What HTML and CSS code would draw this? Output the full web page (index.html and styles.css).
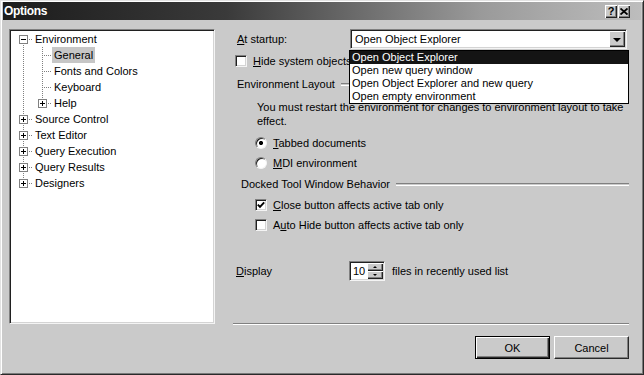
FILE: index.html
```html
<!DOCTYPE html>
<html lang="en">
<head>
    <meta charset="UTF-8">
    <title>Options</title>
    <link rel="stylesheet" href="styles.css">
</head>
<body>
    <div class="window">
        <div class="titlebar">
            <span class="title">Options</span>
            <div class="caption-buttons">
                <span class="cap-btn">?</span>
                <span class="cap-btn">
                    <svg width="8" height="7" viewBox="0 0 8 7"><path d="M0.5 0.5 L7.5 6.5 M7.5 0.5 L0.5 6.5" stroke="#000" stroke-width="1.8"/></svg>
                </span>
            </div>
        </div>

        <div class="content">
            <div class="tree">
                <div class="node"><span class="cell first"><span class="expander"></span></span><span class="label">Environment</span></div>
                <div class="node"><span class="cell pass"></span><span class="cell tee"></span><span class="label selected">General</span></div>
                <div class="node"><span class="cell pass"></span><span class="cell tee"></span><span class="label">Fonts and Colors</span></div>
                <div class="node"><span class="cell pass"></span><span class="cell tee"></span><span class="label">Keyboard</span></div>
                <div class="node"><span class="cell pass"></span><span class="cell last"><span class="expander plus"></span></span><span class="label">Help</span></div>
                <div class="node"><span class="cell tee"><span class="expander plus"></span></span><span class="label">Source Control</span></div>
                <div class="node"><span class="cell tee"><span class="expander plus"></span></span><span class="label">Text Editor</span></div>
                <div class="node"><span class="cell tee"><span class="expander plus"></span></span><span class="label">Query Execution</span></div>
                <div class="node"><span class="cell tee"><span class="expander plus"></span></span><span class="label">Query Results</span></div>
                <div class="node"><span class="cell last"><span class="expander plus"></span></span><span class="label">Designers</span></div>
            </div>

            <div class="pane">
                <div class="field-row startup">
                    <span class="field-label"><u>A</u>t startup:</span>
                    <div class="combo">
                        <span class="combo-text">Open Object Explorer</span>
                        <span class="combo-arrow"><span class="tri-down"></span></span>
                        <ul class="combo-list">
                            <li class="active">Open Object Explorer</li>
                            <li>Open new query window</li>
                            <li>Open Object Explorer and new query</li>
                            <li>Open empty environment</li>
                        </ul>
                    </div>
                </div>

                <div class="check-row hide-row">
                    <span class="checkbox"></span>
                    <span><u>H</u>ide system objects</span>
                </div>

                <div class="group-title env-title">Environment Layout</div>

                <p class="note">You must restart the environment for changes to environment layout to take<br>effect.</p>

                <div class="radio-row first-radio">
                    <span class="radio checked"></span>
                    <span><u>T</u>abbed documents</span>
                </div>
                <div class="radio-row">
                    <span class="radio"></span>
                    <span><u>M</u>DI environment</span>
                </div>

                <div class="group-title docked-title">Docked Tool Window Behavior</div>

                <div class="check-row option-row">
                    <span class="checkbox">
                        <svg width="8" height="8" viewBox="0 0 8 8"><path d="M0.8 3.6 L3 5.9 L7.2 1.3" fill="none" stroke="#000" stroke-width="1.9"/></svg>
                    </span>
                    <span><u>C</u>lose button affects active tab only</span>
                </div>
                <div class="check-row option-row">
                    <span class="checkbox"></span>
                    <span>A<u>u</u>to Hide button affects active tab only</span>
                </div>

                <div class="field-row display-row">
                    <span class="field-label"><u>D</u>isplay</span>
                    <div class="spin">
                        <span class="spin-value">10</span>
                        <span class="spin-buttons">
                            <span class="spin-btn"><span class="tri-up"></span></span>
                            <span class="spin-btn"><span class="tri-small-down"></span></span>
                        </span>
                    </div>
                    <span class="spin-suffix">files in recently used list</span>
                </div>

                <div class="separator"></div>

                <div class="buttons">
                    <button class="btn default">OK</button>
                    <button class="btn">Cancel</button>
                </div>
            </div>
        </div>
    </div>
</body>
</html>
```

FILE: styles.css
```css
body {
    margin: 0;
    font-family: "Liberation Sans", Arial, sans-serif;
    font-size: 11px;
    color: #000;
    background: #cacaca;
}

.window {
    width: 644px;
    height: 375px;
    box-sizing: border-box;
    background: #cacaca;
    border: 1px solid;
    border-color: #e2e2e2 #2a2a2a #2a2a2a #e2e2e2;
    box-shadow: inset 1px 1px #fff, inset -1px -1px #7a7a7a;
    padding: 1px 2px 2px 2px;
}

/* title bar */
.titlebar {
    height: 18px;
    display: flex;
    align-items: center;
    justify-content: space-between;
    padding: 0 11px 0 1px;
    background: linear-gradient(90deg, #1c1c1c 0%, #3a3a3a 35%, #9a9a9a 75%, #bdbdbd 100%);
}

.title {
    color: #fff;
    font-weight: bold;
    font-size: 12px;
    letter-spacing: -0.3px;
}

.caption-buttons {
    display: flex;
    gap: 1px;
}

.cap-btn {
    width: 12px;
    height: 13px;
    display: flex;
    align-items: center;
    justify-content: center;
    background: #cacaca;
    font-weight: bold;
    font-size: 11px;
    box-shadow: inset 1px 1px #fff, inset -1px -1px #222, inset -2px -2px #808080;
}

/* main area */
.content {
    display: flex;
    gap: 18px;
    padding: 9px 12px 0 6px;
}

/* tree */
.tree {
    width: 206px;
    height: 295px;
    box-sizing: border-box;
    flex: none;
    background: #fff;
    border: 1px solid;
    border-color: #808080 #f4f4f4 #f4f4f4 #808080;
    box-shadow: inset 1px 1px #202020, inset -1px -1px #d4d4d4;
    padding: 1px 0 0 4px;
}

.node {
    display: flex;
    height: 16px;
}

.cell {
    width: 19px;
    height: 16px;
    flex: none;
    display: flex;
    justify-content: center;
    align-items: flex-start;
    background-repeat: no-repeat;
}

.cell.pass {
    background-image: repeating-linear-gradient(#808080 0 1px, transparent 1px 2px);
    background-size: 1px 16px;
    background-position: 9px 0;
}

.cell.tee {
    background-image: repeating-linear-gradient(#808080 0 1px, transparent 1px 2px),
        repeating-linear-gradient(90deg, #808080 0 1px, transparent 1px 2px);
    background-size: 1px 16px, 10px 1px;
    background-position: 9px 0, 9px 8px;
}

.cell.last {
    background-image: repeating-linear-gradient(#808080 0 1px, transparent 1px 2px),
        repeating-linear-gradient(90deg, #808080 0 1px, transparent 1px 2px);
    background-size: 1px 8px, 10px 1px;
    background-position: 9px 0, 9px 8px;
}

.cell.first {
    background-image: repeating-linear-gradient(#808080 0 1px, transparent 1px 2px),
        repeating-linear-gradient(90deg, #808080 0 1px, transparent 1px 2px);
    background-size: 1px 8px, 10px 1px;
    background-position: 9px 8px, 9px 8px;
}

.expander {
    width: 9px;
    height: 9px;
    box-sizing: border-box;
    margin-top: 4px;
    border: 1px solid #808080;
    background: #fff linear-gradient(#000, #000) center / 5px 1px no-repeat;
}

.expander.plus {
    background: linear-gradient(#000, #000) center / 5px 1px no-repeat,
        linear-gradient(#000, #000) center / 1px 5px no-repeat, #fff;
}

.label {
    line-height: 16px;
    padding: 0 2px;
    white-space: nowrap;
}

.label.selected {
    background: #c6c6c6;
}

/* right pane */
.pane {
    flex: 1;
    display: flex;
    flex-direction: column;
}

.field-row {
    display: flex;
    align-items: center;
    height: 20px;
}

.startup .field-label {
    width: 113px;
    padding-left: 4px;
}

.display-row {
    margin-top: 26px;
}

.display-row .field-label {
    width: 113px;
    padding-left: 3px;
}

.combo {
    position: relative;
    flex: 1;
    margin-right: 2px;
    height: 20px;
    box-sizing: border-box;
    display: flex;
    align-items: center;
    background: #fff;
    border: 1px solid;
    border-color: #808080 #f4f4f4 #f4f4f4 #808080;
    box-shadow: inset 1px 1px #202020, inset -1px -1px #d4d4d4;
    padding: 1px;
}

.combo-text {
    flex: 1;
    padding-left: 3px;
}

.combo-arrow,
.spin-btn {
    display: flex;
    align-items: center;
    justify-content: center;
    background: #cacaca;
    box-shadow: inset 1px 1px #fff, inset -1px -1px #222, inset -2px -2px #808080;
}

.combo-arrow {
    width: 16px;
    height: 16px;
}

.tri-down {
    border-left: 4px solid transparent;
    border-right: 4px solid transparent;
    border-top: 4px solid #000;
    margin-top: 1px;
}

.combo-list {
    position: absolute;
    top: calc(100% + 2px);
    left: -2px;
    right: -3px;
    z-index: 2;
    margin: 0;
    padding: 0;
    list-style: none;
    background: #fff;
    border: 1px solid #000;
}

.combo-list li {
    height: 13px;
    line-height: 13px;
    padding-left: 2px;
    white-space: nowrap;
}

.combo-list li.active {
    background: #141414;
    color: #fff;
}

.check-row,
.radio-row {
    display: flex;
    align-items: center;
    gap: 6px;
    height: 20px;
    white-space: nowrap;
}

.hide-row {
    height: 23px;
    padding-left: 2px;
}

.option-row {
    padding-left: 22px;
}

.checkbox {
    width: 12px;
    height: 12px;
    box-sizing: border-box;
    flex: none;
    display: flex;
    align-items: center;
    justify-content: center;
    background: #fff;
    border: 1px solid;
    border-color: #808080 #f4f4f4 #f4f4f4 #808080;
    box-shadow: inset 1px 1px #202020, inset -1px -1px #d4d4d4;
}

.radio-row {
    padding-left: 22px;
}

.first-radio {
    margin-top: 5px;
}

.radio {
    width: 12px;
    height: 12px;
    box-sizing: border-box;
    flex: none;
    border-radius: 50%;
    background: #fff;
    border: 1px solid;
    border-color: #808080 #f4f4f4 #f4f4f4 #808080;
    box-shadow: inset 1px 1px #202020;
}

.radio.checked {
    background: radial-gradient(circle, #000 0 2px, #fff 2.2px);
}

.group-title {
    display: flex;
    align-items: center;
    gap: 6px;
    white-space: nowrap;
}

.group-title::after {
    content: "";
    flex: 1;
    height: 1px;
    border-top: 1px solid #808080;
    border-bottom: 1px solid #fff;
}

.env-title {
    height: 24px;
    padding-left: 4px;
}

.docked-title {
    height: 22px;
    padding-left: 8px;
}

.note {
    margin: 4px 0 0;
    padding-left: 24px;
    line-height: 14px;
    white-space: nowrap;
}

.spin {
    width: 36px;
    height: 20px;
    box-sizing: border-box;
    display: flex;
    background: #fff;
    border: 1px solid;
    border-color: #808080 #f4f4f4 #f4f4f4 #808080;
    box-shadow: inset 1px 1px #202020, inset -1px -1px #d4d4d4;
    padding: 1px;
}

.spin-value {
    flex: 1;
    line-height: 16px;
    padding-left: 2px;
}

.spin-buttons {
    width: 16px;
    display: flex;
    flex-direction: column;
}

.spin-btn {
    height: 8px;
}

.tri-up {
    border-left: 2px solid transparent;
    border-right: 2px solid transparent;
    border-bottom: 2px solid #000;
}

.tri-small-down {
    border-left: 2px solid transparent;
    border-right: 2px solid transparent;
    border-top: 2px solid #000;
}

.spin-suffix {
    margin-left: 7px;
}

.separator {
    margin-top: 42px;
    border-top: 1px solid #808080;
    border-bottom: 1px solid #fff;
}

.buttons {
    display: flex;
    justify-content: flex-end;
    gap: 4px;
    margin-top: 11px;
}

.btn {
    width: 75px;
    height: 23px;
    font-family: inherit;
    font-size: 11px;
    color: #000;
    background: #cacaca;
    border: 1px solid;
    border-color: #fff #2a2a2a #2a2a2a #fff;
    box-shadow: inset -1px -1px #808080;
    padding: 0;
}

.btn.default {
    border-color: #000;
    box-shadow: inset 1px 1px #fff, inset -1px -1px #2a2a2a, inset -2px -2px #808080;
}
```
